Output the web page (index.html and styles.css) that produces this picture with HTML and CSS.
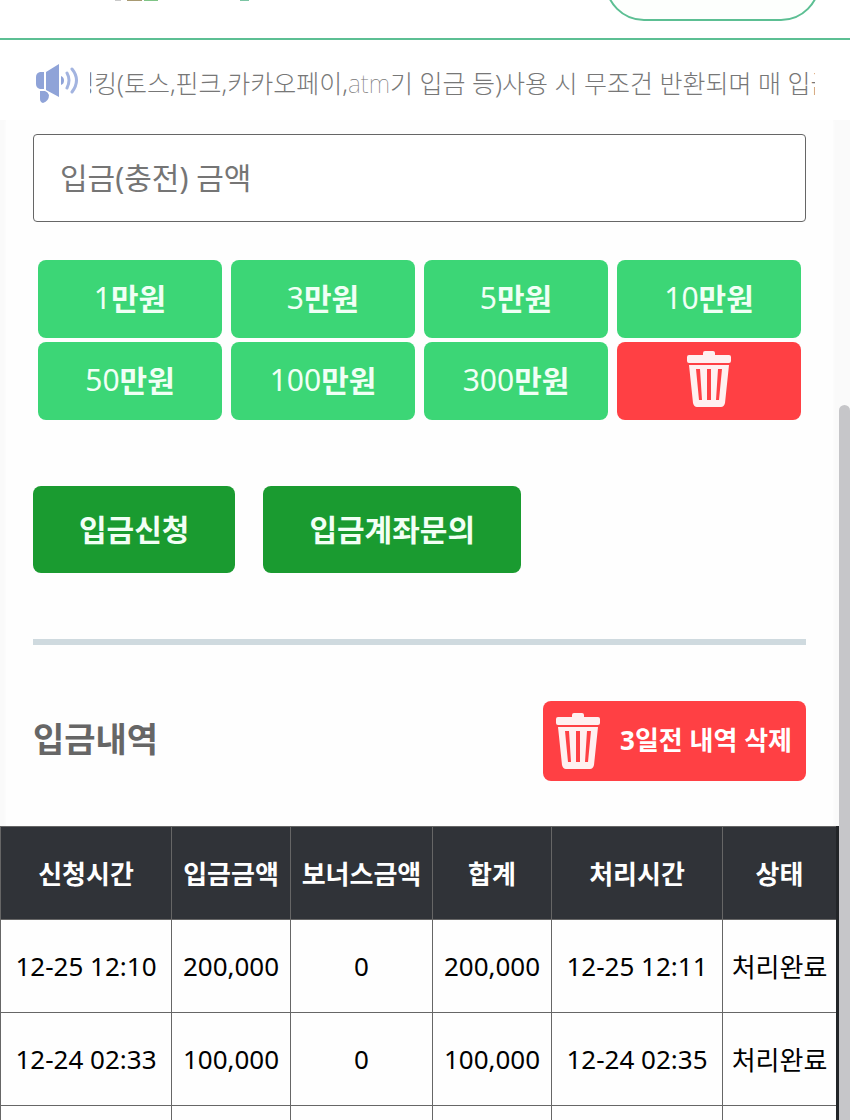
FILE: index.html
```html
<!DOCTYPE html>
<html lang="ko">
<head>
    <meta charset="utf-8">
    <title>입금신청</title>
    <meta name="viewport" content="width=device-width, initial-scale=1">
    <link rel="stylesheet" href="styles.css">
</head>
<body>

    <!-- Shared trash icon -->
    <svg class="sprite" aria-hidden="true">
        <symbol id="trash" viewBox="0 0 44 56">
            <path d="M16 4V2q0-2 2-2h8q2 0 2 2v2h14q2 0 2 2v4q0 2-2 2H2q-2 0-2-2V6q0-2 2-2z"/>
            <path fill-rule="evenodd" d="M2 14h40l-4 38q-1 4-4 4H10q-3 0-4-4zM9 18l3 31h3L13 18zM20 18v31h4V18zM31 18l-2 31h3l3-31z"/>
        </symbol>
    </svg>

    <header class="header">
        <svg class="logo" width="160" height="2" viewBox="0 0 160 2" aria-hidden="true">
            <path fill="#c9c9c9" d="M15 0h6v1h-6z"/>
            <path fill="#a89a72" d="M27 0h15v1H27z"/>
            <path fill="#7fc486" d="M44 0h14v1H44z"/>
            <path fill="#7cc5a4" d="M140 0h9v1h-9z"/>
        </svg>
        <a class="header-pill" href="#" aria-label="메뉴"></a>
    </header>

    <div class="notice">
        <svg class="notice-icon" width="44" height="40" viewBox="0 0 44 40" aria-hidden="true">
            <path fill="#8fa3d8" d="M4 9h4v17H4q-4-1-4-5v-7q0-4 4-5zM10 9L23 1v33l-13-7zM4 28h5q3 1 4 4 0 6-6 8-3-1-3-4z"/>
            <path fill="#8fa3d8" d="M25 13q3 1 3 4.500t-3 4.500z"/>
            <path fill="none" stroke="#a3b4e0" stroke-width="3" stroke-linecap="round" d="M31 10q4 7 0 15M36 6q9 11 0 23"/>
        </svg>
        <div class="notice-scroll">
            <p class="notice-text">뱅킹(토스,핀크,카카오페이,<span class="thin">atm</span>기 입금 등)사용 시 무조건 반환되며 매 입금</p>
        </div>
    </div>

    <main class="page">
        <div class="panel">
            <form class="deposit" action="#">
                <input class="amount" type="text" placeholder="입금(충전) 금액" aria-label="입금(충전) 금액">

                <div class="presets">
                    <button type="button" class="preset">1<b>만원</b></button>
                    <button type="button" class="preset">3<b>만원</b></button>
                    <button type="button" class="preset">5<b>만원</b></button>
                    <button type="button" class="preset">10<b>만원</b></button>
                    <button type="button" class="preset">50<b>만원</b></button>
                    <button type="button" class="preset">100<b>만원</b></button>
                    <button type="button" class="preset">300<b>만원</b></button>
                    <button type="button" class="preset clear" aria-label="금액 지우기">
                        <svg class="trash"><use href="#trash"/></svg>
                    </button>
                </div>

                <div class="actions">
                    <button type="submit" class="action">입금신청</button>
                    <button type="button" class="action">입금계좌문의</button>
                </div>
            </form>

            <hr class="divider">

            <div class="history-head">
                <h2 class="history-title">입금내역</h2>
                <button type="button" class="delete">
                    <svg class="trash"><use href="#trash"/></svg>
                    <span class="delete-label">3일전 내역 삭제</span>
                </button>
            </div>
        </div>

        <table class="history">
            <colgroup>
                <col class="col-time">
                <col class="col-amount">
                <col class="col-bonus">
                <col class="col-amount">
                <col class="col-time">
                <col class="col-state">
            </colgroup>
            <thead>
                <tr>
                    <th>신청시간</th>
                    <th>입금금액</th>
                    <th>보너스금액</th>
                    <th>합계</th>
                    <th>처리시간</th>
                    <th>상태</th>
                </tr>
            </thead>
            <tbody>
                <tr>
                    <td>12-25 12:10</td>
                    <td>200,000</td>
                    <td>0</td>
                    <td>200,000</td>
                    <td>12-25 12:11</td>
                    <td>처리완료</td>
                </tr>
                <tr>
                    <td>12-24 02:33</td>
                    <td>100,000</td>
                    <td>0</td>
                    <td>100,000</td>
                    <td>12-24 02:35</td>
                    <td>처리완료</td>
                </tr>
                <tr>
                    <td></td>
                    <td></td>
                    <td></td>
                    <td></td>
                    <td></td>
                    <td></td>
                </tr>
            </tbody>
        </table>
    </main>

    <div class="scroll-thumb"></div>

</body>
</html>
```
FILE: styles.css
```css
* {
    box-sizing: border-box;
}

html, body {
    height: 100%;
    overflow: hidden;
}

body {
    margin: 0;
    background: #fafafa;
    color: #000;
    font-family: "Noto Sans", "Noto Sans CJK KR", sans-serif;
}

button, input {
    font: inherit;
}

.sprite {
    display: none;
}

/* Header */
.header {
    display: flex;
    align-items: flex-end;
    justify-content: space-between;
    height: 40px;
    padding: 0 30px 17px 100px;
    overflow: hidden;
    background: #fff;
    border-bottom: 2px solid #5cbf93;
}

.logo {
    align-self: flex-start;
}

.header-pill {
    width: 215px;
    height: 78px;
    border: 2px solid #5cbf93;
    border-radius: 39px;
    background: #fdfffd;
}

/* Rolling notice */
.notice {
    display: flex;
    align-items: center;
    height: 80px;
    padding: 6px 35px 0 36px;
    background: #fff;
}

.notice-icon {
    flex: none;
    margin-right: 10px;
}

.notice-scroll {
    flex: 1;
    overflow: hidden;
}

.notice-text {
    margin: 0 0 0 -19px;
    color: #777;
    font-size: 25px;
    font-weight: 300;
    line-height: 40px;
    white-space: nowrap;
}

.thin {
    font-weight: 100;
}

/* Deposit form */
.page {
    padding-right: 12px;
}

.panel {
    margin: 0 5px 0 6px;
    padding: 14px 27px 45px;
    background: #fefefe;
    box-shadow: 0 0 4px #fefefe;
}

.amount {
    display: block;
    width: 100%;
    height: 88px;
    padding: 0 26px 2px;
    border: 1px solid #666;
    border-radius: 4px;
    background: #fff;
    font-size: 30px;
}

.amount::placeholder {
    color: #757575;
}

.presets {
    display: grid;
    grid-template-columns: repeat(4, 1fr);
    gap: 4px 9px;
    margin: 38px 5px 0;
}

.preset {
    display: flex;
    align-items: center;
    justify-content: center;
    height: 78px;
    padding: 0 0 4px;
    border: 0;
    border-radius: 8px;
    background: #3cd676;
    color: #f0fff5;
    font-size: 30px;
}

.preset b {
    font-weight: 600;
}

.preset.clear {
    background: #ff4044;
}

.trash {
    width: 44px;
    height: 56px;
    fill: #fff0f0;
}

.actions {
    display: flex;
    gap: 28px;
    margin-top: 66px;
}

.action {
    height: 87px;
    padding: 0 46px 4px;
    border: 0;
    border-radius: 8px;
    background: #1a9b30;
    color: #f2fff5;
    font-size: 30px;
    font-weight: 600;
}

.divider {
    height: 6px;
    margin: 66px 0 56px;
    border: 0;
    background: #cfdadf;
}

/* Deposit history */
.history-head {
    display: flex;
    align-items: center;
    justify-content: space-between;
}

.history-title {
    margin: 0;
    padding-bottom: 8px;
    color: #666;
    font-size: 34px;
    font-weight: 700;
}

.delete {
    display: flex;
    align-items: center;
    gap: 20px;
    height: 80px;
    padding: 0 14px 0 13px;
    border: 0;
    border-radius: 8px;
    background: #ff4044;
    color: #fff;
    font-size: 26px;
    font-weight: 700;
}

.delete-label {
    padding-bottom: 4px;
}

.history {
    width: 100%;
    table-layout: fixed;
    border-collapse: collapse;
    background: #fefefe;
    font-size: 26px;
    text-align: center;
}

.col-time { width: 171px; }
.col-amount { width: 119px; }
.col-bonus { width: 142px; }
.col-state { width: 115px; }

.history th,
.history td {
    height: 93px;
    padding: 0;
    border: 1px solid #666;
    white-space: nowrap;
}

.history th {
    background: #303338;
    color: #fff;
    font-weight: 700;
}

.history th:last-child,
.history td:last-child {
    border-right: 3px solid #222528;
}

.scroll-thumb {
    position: fixed;
    top: 405px;
    right: 0;
    bottom: -12px;
    width: 11px;
    border-radius: 6px;
    background: #c6c6c9;
}
```
